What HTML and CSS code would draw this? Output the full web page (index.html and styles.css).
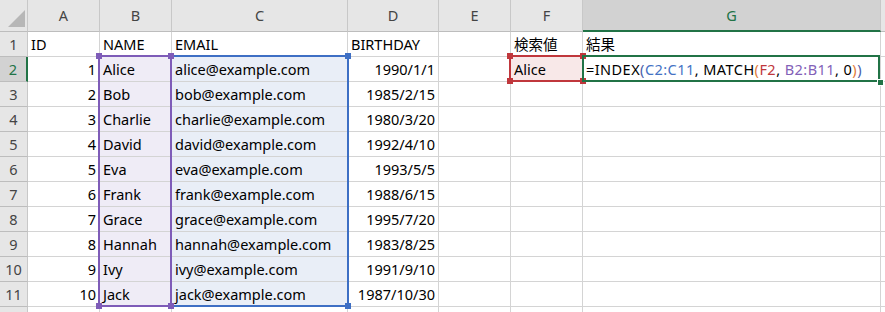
FILE: index.html
```html
<!DOCTYPE html>
<html lang="ja">
<head>
<meta charset="utf-8">
<title>Sheet</title>
<link rel="stylesheet" href="styles.css">
</head>
<body>
<div class="sheet">
  <div class="c h corner"><span class="tri"></span></div>
  <div class="c h">A</div>
  <div class="c h">B</div>
  <div class="c h">C</div>
  <div class="c h">D</div>
  <div class="c h">E</div>
  <div class="c h">F</div>
  <div class="c h hsel hcol">G</div>
  <div class="c h"></div>

  <div class="c h">1</div>
  <div class="c">ID</div>
  <div class="c">NAME</div>
  <div class="c">EMAIL</div>
  <div class="c">BIRTHDAY</div>
  <div class="c"></div>
  <div class="c">検索値</div>
  <div class="c">結果</div>
  <div class="c"></div>

  <div class="c h hsel hrow">2</div>
  <div class="c r">1</div>
  <div class="c fp">Alice</div>
  <div class="c fb">alice@example.com</div>
  <div class="c r">1990/1/1</div>
  <div class="c"></div>
  <div class="c fr">Alice</div>
  <div class="c"><span class="formula">=INDEX<span class="po">(</span><span class="kb">C2:C11</span>, MATCH<span class="pi">(</span><span class="kr">F2</span>, <span class="kp">B2:B11</span>, 0<span class="pi">)</span><span class="po">)</span></span></div>
  <div class="c"></div>

  <div class="c h">3</div>
  <div class="c r">2</div>
  <div class="c fp">Bob</div>
  <div class="c fb">bob@example.com</div>
  <div class="c r">1985/2/15</div>
  <div class="c"></div><div class="c"></div><div class="c"></div><div class="c"></div>

  <div class="c h">4</div>
  <div class="c r">3</div>
  <div class="c fp">Charlie</div>
  <div class="c fb">charlie@example.com</div>
  <div class="c r">1980/3/20</div>
  <div class="c"></div><div class="c"></div><div class="c"></div><div class="c"></div>

  <div class="c h">5</div>
  <div class="c r">4</div>
  <div class="c fp">David</div>
  <div class="c fb">david@example.com</div>
  <div class="c r">1992/4/10</div>
  <div class="c"></div><div class="c"></div><div class="c"></div><div class="c"></div>

  <div class="c h">6</div>
  <div class="c r">5</div>
  <div class="c fp">Eva</div>
  <div class="c fb">eva@example.com</div>
  <div class="c r">1993/5/5</div>
  <div class="c"></div><div class="c"></div><div class="c"></div><div class="c"></div>

  <div class="c h">7</div>
  <div class="c r">6</div>
  <div class="c fp">Frank</div>
  <div class="c fb">frank@example.com</div>
  <div class="c r">1988/6/15</div>
  <div class="c"></div><div class="c"></div><div class="c"></div><div class="c"></div>

  <div class="c h">8</div>
  <div class="c r">7</div>
  <div class="c fp">Grace</div>
  <div class="c fb">grace@example.com</div>
  <div class="c r">1995/7/20</div>
  <div class="c"></div><div class="c"></div><div class="c"></div><div class="c"></div>

  <div class="c h">9</div>
  <div class="c r">8</div>
  <div class="c fp">Hannah</div>
  <div class="c fb">hannah@example.com</div>
  <div class="c r">1983/8/25</div>
  <div class="c"></div><div class="c"></div><div class="c"></div><div class="c"></div>

  <div class="c h">10</div>
  <div class="c r">9</div>
  <div class="c fp">Ivy</div>
  <div class="c fb">ivy@example.com</div>
  <div class="c r">1991/9/10</div>
  <div class="c"></div><div class="c"></div><div class="c"></div><div class="c"></div>

  <div class="c h">11</div>
  <div class="c r">10</div>
  <div class="c fp">Jack</div>
  <div class="c fb">jack@example.com</div>
  <div class="c r">1987/10/30</div>
  <div class="c"></div><div class="c"></div><div class="c"></div><div class="c"></div>

  <div class="c h"></div>
  <div class="c"></div><div class="c"></div><div class="c"></div><div class="c"></div>
  <div class="c"></div><div class="c"></div><div class="c"></div><div class="c"></div>

  <div class="sel sel-blue"><i class="hd tl"></i><i class="hd tr"></i><i class="hd bl"></i><i class="hd br"></i></div>
  <div class="sel sel-purple"><i class="hd tl"></i><i class="hd tr"></i><i class="hd bl"></i><i class="hd br"></i></div>
  <div class="sel sel-red"><i class="hd tl"></i><i class="hd tr"></i><i class="hd bl"></i><i class="hd br"></i></div>
  <div class="sel sel-active"><i class="fill-handle"></i></div>
</div>
</body>
</html>
```

FILE: styles.css
```css
* { box-sizing: border-box; }
html, body { margin: 0; padding: 0; background: #fff; }
body {
  font-family: "Noto Sans", "Noto Sans CJK JP", sans-serif;
  font-size: 14.5px;
  color: #000;
  overflow: hidden;
}
.sheet {
  position: relative;
  display: grid;
  grid-template-columns: 28px 72px 72px 176px 91px 72px 72px 298px 1fr;
  grid-template-rows: 32px repeat(12, 25px);
  width: 885px;
  height: 312px;
  overflow: hidden;
}
.c {
  border-right: 1px solid #d4d4d4;
  border-bottom: 1px solid #d4d4d4;
  padding: 0 3px;
  display: flex;
  align-items: center;
  white-space: nowrap;
  line-height: 1;
  overflow: visible;
}
.r { justify-content: flex-end; }
.h {
  background: #e6e6e6;
  border-right-color: #c8c8c8;
  border-bottom-color: #bdbdbd;
  color: #444;
  justify-content: center;
  padding: 0;
}
.corner { position: relative; }
.tri {
  position: absolute;
  left: 8px;
  top: 10px;
  width: 17px;
  height: 17px;
  background: #b7b7b7;
  clip-path: polygon(100% 0, 100% 100%, 0 100%);
}
.hsel { background: #d2d2d2; color: #217346; }
.hcol { border-bottom: 2px solid #217346; }
.hrow { border-right: 2px solid #217346; }
.fp { background: #efecf6; }
.fb { background: #e9eef7; }
.fr { background: #f8e8e8; }
.formula { letter-spacing: 0.45px; white-space: pre; }
.kb { color: #4472c4; }
.kr { color: #c0373c; }
.kp { color: #8361b8; }
.pi { color: #e07b39; }
.po { color: #4b5ea8; }

.sel {
  position: absolute;
  border: 2px solid;
}
.sel-purple { left: 98px; top: 55px; width: 74px; height: 252px; border-color: #7e5cb8; color: #7e5cb8; }
.sel-blue { left: 170px; top: 55px; width: 179px; height: 252px; border-color: #3e6fc4; color: #3e6fc4; }
.sel-red { left: 509px; top: 55px; width: 75px; height: 27px; border-color: #c0373c; color: #c0373c; }
.sel-active { left: 582px; top: 55px; width: 298px; height: 27px; border-color: #217346; }
.hd {
  position: absolute;
  width: 6px;
  height: 6px;
  background: currentColor;
}
.hd.tl { left: -4px; top: -4px; }
.hd.tr { right: -4px; top: -4px; }
.hd.bl { left: -4px; bottom: -4px; }
.hd.br { right: -4px; bottom: -4px; }
.fill-handle {
  position: absolute;
  right: -6px;
  bottom: -6px;
  width: 7px;
  height: 7px;
  background: #217346;
  border: 1px solid #fff;
}
```
